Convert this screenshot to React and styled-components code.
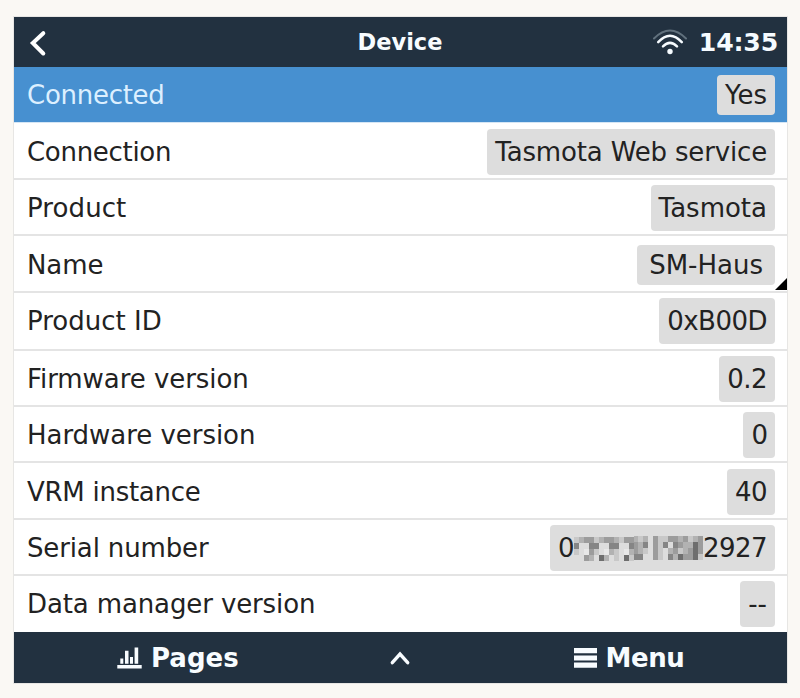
import React from "react";
import styled, { createGlobalStyle } from "styled-components";

const Global = createGlobalStyle`
  body { margin: 0; background: #faf8f4; }
  * { box-sizing: border-box; }
`;
const Page = styled.main`
  width: 800px; height: 698px; padding: 17px 13px 15px 14px;
  background: #faf8f4; color: #222;
  font: 26px "DejaVu Sans", sans-serif;
`;
const Screen = styled.section`
  width: 773px; height: 666px; display: flex; flex-direction: column;
  background: #fff; box-shadow: 0 0 0 1px #e7e6e4;
`;
const Header = styled.header`
  height: 50px; display: grid; grid-template-columns: 1fr auto 1fr; align-items: center;
  background: #223140; color: #fff; padding: 0 9px 0 8px; font-weight: bold;
`;
const BackButton = styled.button`
  width: 32px; height: 40px; padding: 0; border: 0; background: none; color: inherit;
  margin-left: 7px; margin-top: 2px;
`;
const Title = styled.h1`margin: 0; font-size: 22.5px; line-height: 50px; color: #f8fcff;`;
const Status = styled.div`
  display: flex; align-items: center; justify-content: flex-end; gap: 11px;
  font-size: 25.2px; letter-spacing: -0.2px; color: #f6fbff;
`;
const Icon = styled.svg`display: block; flex: none;`;
const List = styled.ul`margin: 0; padding: 0; list-style: none;`;
const Row = styled.li`
  position: relative; height: ${p => p.$height}px; display: flex; align-items: center;
  justify-content: space-between; padding: ${p => p.$top}px 12px 0 13px;
  border-bottom: ${p => p.$active ? "1px solid #d5e6f5" : "2px solid #e4e4e4"};
  background: ${p => p.$active ? "#4790d0" : "#fff"};
  color: ${p => p.$active ? "#dcefff" : "#222"};
  &:last-child { border-bottom: 1px solid #fff; }
`;
const Label = styled.span`letter-spacing: ${p => p.$spacing}px;`;
const Value = styled.span`
  height: ${p => p.$short ? 40 : 46}px; display: flex; align-items: center;
  padding: 0 ${p => p.$wide ? 12 : 8}px; border-radius: 4px; background: #ddd; color: #222;
  white-space: pre; letter-spacing: ${p => p.$spacing}px;
`;
const Corner = styled.i`
  position: absolute; right: 0; bottom: 1px; width: 12px; height: 12px;
  background: #000; clip-path: polygon(100% 0, 100% 100%, 0 100%);
`;
const Footer = styled.footer`
  height: 51px; display: grid; grid-template-columns: 328px 116px 1fr; align-items: center;
  background: #223140; color: #fff; font-weight: bold;
`;
const FooterItem = styled.button`
  height: 51px; display: flex; align-items: center; justify-content: ${p => p.$center ? "center" : "flex-start"};
  gap: ${p => p.$gap || 0}px; padding: 0 0 0 ${p => p.$inset || 0}px; border: 0; background: none;
  color: #f8fcff; font: inherit; letter-spacing: ${p => p.$spacing || 0}px;
`;

const shades = { a: "#e8e8e8", b: "#dddddd", c: "#c8c8c8", d: "#b2b2b2", e: "#9c9c9c", f: "#858585", g: "#6e6e6e" };
const mosaic = [
  "cdeecdeedceedcdbecceedecde",
  "fbbffbbffbbfedfbecfbfeddge",
  "cbaecbadcbadedcbecbdecdege",
  "bbedbgdbcbgcffbbecbfdgeegc",
];
const Mosaic = () => (
  <Icon width="129" height="25" viewBox="0 0 129 25" shapeRendering="crispEdges" aria-hidden="true">
    {mosaic.flatMap((line, y) => [...line].map((s, x) => (
      <rect key={`${x}-${y}`} x={x * 4.96} y={y * 6 + (x < 12 ? 1 : 0)} width="4.97" height="6" fill={shades[s]} />
    )))}
  </Icon>
);

const BackIcon = () => (
  <Icon width="32" height="40" viewBox="0 0 32 40" fill="none" stroke="#fff" strokeWidth="4" strokeLinecap="round" strokeLinejoin="miter">
    <path d="M14.3 10.2 L3.8 20 L14.3 30.5" />
  </Icon>
);
const WifiIcon = () => (
  <Icon width="36" height="28" viewBox="0 0 36 28" fill="none" stroke="#f6fbff" strokeWidth="2.5" strokeLinecap="round">
    <path d="M2 10.5 Q18 -5.5 34 10.5" stroke="#60707d" strokeWidth="2" />
    <path d="M6.2 14.2 Q18 1.4 29.8 14.2" />
    <path d="M11 18.3 Q18 11.3 25 18.3" />
    <circle cx="18" cy="23.5" r="2.7" fill="#f6fbff" stroke="none" />
  </Icon>
);
const ChartIcon = () => (
  <Icon width="25" height="22" viewBox="0 0 25 22" fill="#f8fcff">
    <path d="M0.3 18h24.4v3.6H0.3z M3.3 11.5h3v5.2h-3z M8 3.8h3.5v12.9H8z M13 10h3v6.7h-3z M17.6 0.5h3.6v16.2h-3.6z" />
  </Icon>
);
const UpIcon = () => (
  <Icon width="22" height="16" viewBox="0 0 22 16" fill="none" stroke="#f8fcff" strokeWidth="3.4" strokeLinecap="round" strokeLinejoin="miter">
    <path d="M3.3 12.7 L11 4 L18.7 12.7" />
  </Icon>
);
const MenuIcon = () => (
  <Icon width="23" height="20" viewBox="0 0 23 20" fill="#f8fcff">
    <path d="M0 0h23v5.2H0z M0 7.4h23v5.1H0z M0 14.6h23v5.1H0z" />
  </Icon>
);

const rows = [
  { label: "Connected", value: "Yes", height: 56, ls: -0.27, active: true, short: true, top: 1 },
  { label: "Connection", value: "Tasmota Web service", height: 57, ls: -0.3, vs: -0.16 },
  { label: "Product", value: "Tasmota", height: 56, ls: 0.1 },
  { label: "Name", value: "SM-Haus", height: 57, ls: -0.1, short: true, editable: true },
  { label: "Product ID", value: "0xB00D", height: 58, ls: 0, vs: -0.5, top: 0 },
  { label: "Firmware version", value: "0.2", height: 56, ls: -0.06, vs: -0.5 },
  { label: "Hardware version", value: "0", height: 56, ls: -0.04, vs: -1 },
  { label: "VRM instance", value: "40", height: 57, ls: -0.27, vs: -0.5 },
  { label: "Serial number", value: <>0<Mosaic />2927</>, height: 56, ls: -0.14, vs: -0.55 },
  { label: "Data manager version", value: "--", height: 56, ls: -0.12, top: 0 },
];

export default function App() {
  return (
    <>
      <Global />
      <Page>
        <Screen>
          <Header>
            <BackButton aria-label="Back"><BackIcon /></BackButton>
            <Title>Device</Title>
            <Status><WifiIcon />14:35</Status>
          </Header>
          <List>
            {rows.map(r => (
              <Row key={r.label} $height={r.height} $active={r.active} $top={r.top ?? 2}>
                <Label $spacing={r.ls}>{r.label}</Label>
                <Value $short={r.short} $wide={r.editable} $spacing={r.vs || 0}>{r.value}</Value>
                {r.editable && <Corner />}
              </Row>
            ))}
          </List>
          <Footer>
            <FooterItem $inset={103} $gap={9}><ChartIcon />Pages</FooterItem>
            <FooterItem $center aria-label="Expand"><UpIcon /></FooterItem>
            <FooterItem $inset={116} $gap={8.5} $spacing={-0.4}><MenuIcon />Menu</FooterItem>
          </Footer>
        </Screen>
      </Page>
    </>
  );
}
